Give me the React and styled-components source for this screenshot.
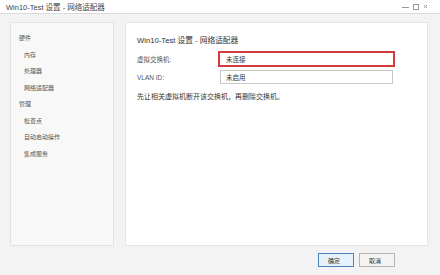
import React from 'react';
import styled, { createGlobalStyle } from 'styled-components';

const Global = createGlobalStyle`
  html, body {
    margin: 0;
    padding: 0;
    background: #f3f3f3;
  }
  body {
    font-family: "Liberation Sans", "Noto Sans CJK SC", sans-serif;
    color: #333;
  }
`;

const Styled = {
  Window: styled.div`
    width: 440px;
    height: 275px;
    display: flex;
    flex-direction: column;
    background: #f3f3f3;
    overflow: hidden;
  `,
  TitleBar: styled.div`
    height: 13px;
    flex-shrink: 0;
    display: flex;
    align-items: center;
    justify-content: space-between;
    padding: 0 12px 0 6px;
    background: #fff;
    border-bottom: 1px solid #dcdcdc;
    font-size: 7.5px;
    color: #444;
  `,
  Controls: styled.div`
    display: flex;
    align-items: center;
    gap: 4px;
  `,
  Body: styled.div`
    display: flex;
    gap: 11px;
    padding: 8px 12px 0 10px;
    height: 224px;
  `,
  Nav: styled.div`
    width: 104px;
    flex-shrink: 0;
    box-sizing: border-box;
    background: #f8f8f8;
    border: 1px solid #e2e2e2;
    padding: 7px 0 0 0;
  `,
  NavItem: styled.div`
    height: 16.5px;
    line-height: 16.5px;
    font-size: 6px;
    color: #555;
    padding-left: ${p => (p.$child ? '13px' : '8px')};
  `,
  Panel: styled.div`
    flex: 1;
    box-sizing: border-box;
    background: #fff;
    border: 1px solid #e4e4e4;
    padding: 12px 11px;
  `,
  Heading: styled.div`
    font-size: 7.7px;
    color: #333;
    line-height: 12px;
    margin-bottom: 4px;
  `,
  Form: styled.div`
    display: grid;
    grid-template-columns: 81px 177px;
    row-gap: 3px;
    align-items: center;
  `,
  Label: styled.div`
    font-size: 6.5px;
    color: #555;
  `,
  Field: styled.div`
    box-sizing: border-box;
    height: ${p => (p.$highlight ? '16px' : '14px')};
    margin: ${p => (p.$highlight ? '0' : '0 2px')};
    border: ${p => (p.$highlight ? '2px solid #d23c3c' : '1px solid #c8c8c8')};
    padding-left: ${p => (p.$highlight ? '6px' : '5px')};
    display: flex;
    align-items: center;
    font-size: 6.5px;
    color: #333;
    background: #fff;
  `,
  Note: styled.div`
    margin-top: 7px;
    font-size: 7px;
    color: #333;
  `,
  Footer: styled.div`
    display: flex;
    justify-content: flex-end;
    gap: 5px;
    padding: 7px 45px 0 0;
  `,
  Button: styled.div`
    box-sizing: border-box;
    width: 36px;
    height: 14px;
    display: flex;
    align-items: center;
    padding-left: 9px;
    font-size: 6px;
    color: #333;
    background: ${p => (p.$primary ? '#e5f1fb' : '#f4f4f4')};
    border: 1px solid ${p => (p.$primary ? '#4a86c0' : '#b4b4b4')};
  `,
};

const navItems = [
  { label: '硬件' },
  { label: '内存', child: true },
  { label: '处理器', child: true },
  { label: '网络适配器', child: true },
  { label: '管理' },
  { label: '检查点', child: true },
  { label: '自动启动操作', child: true },
  { label: '集成服务', child: true },
];

const App = () => (
  <Styled.Window>
    <Global />
    <Styled.TitleBar>
      <span>Win10-Test 设置 - 网络适配器</span>
      <Styled.Controls>
        <svg width="7" height="6" viewBox="0 0 7 6">
          <line x1="0" y1="3.5" x2="7" y2="3.5" stroke="#999" strokeWidth="1" />
        </svg>
        <svg width="6" height="6" viewBox="0 0 6 6">
          <rect x="0.5" y="0.5" width="5" height="5" fill="none" stroke="#999" strokeWidth="1" />
        </svg>
        <svg width="5" height="5" viewBox="0 0 5 5">
          <path d="M1 1L4 4M4 1L1 4" stroke="#999" strokeWidth="0.9" />
        </svg>
      </Styled.Controls>
    </Styled.TitleBar>
    <Styled.Body>
      <Styled.Nav>
        {navItems.map(item => (
          <Styled.NavItem key={item.label} $child={item.child}>
            {item.label}
          </Styled.NavItem>
        ))}
      </Styled.Nav>
      <Styled.Panel>
        <Styled.Heading>Win10-Test 设置 - 网络适配器</Styled.Heading>
        <Styled.Form>
          <Styled.Label>虚拟交换机:</Styled.Label>
          <Styled.Field $highlight>未连接</Styled.Field>
          <Styled.Label>VLAN ID:</Styled.Label>
          <Styled.Field>未启用</Styled.Field>
        </Styled.Form>
        <Styled.Note>先让相关虚拟机断开该交换机，再删除交换机。</Styled.Note>
      </Styled.Panel>
    </Styled.Body>
    <Styled.Footer>
      <Styled.Button $primary>确定</Styled.Button>
      <Styled.Button>取消</Styled.Button>
    </Styled.Footer>
  </Styled.Window>
);

export default App;
